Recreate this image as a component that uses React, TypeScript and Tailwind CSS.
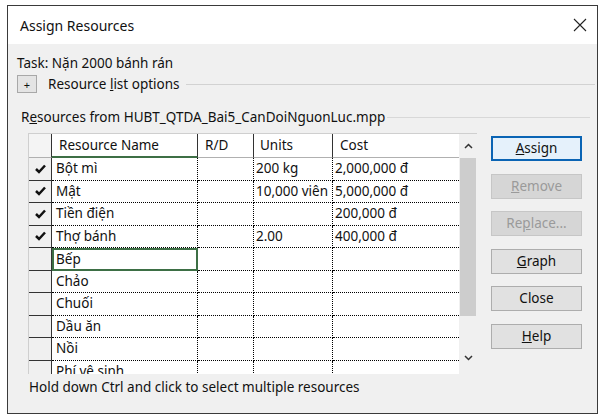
import React from "react"

const font = { fontFamily: '"Noto Sans", "Open Sans", sans-serif' }

type Row = { checked: boolean; name: string; units: string; cost: string }

const rows: Row[] = [
  { checked: true, name: "Bột mì", units: "200 kg", cost: "2,000,000 đ" },
  { checked: true, name: "Mật", units: "10,000 viên", cost: "5,000,000 đ" },
  { checked: true, name: "Tiền điện", units: "", cost: "200,000 đ" },
  { checked: true, name: "Thợ bánh", units: "2.00", cost: "400,000 đ" },
  { checked: false, name: "Bếp", units: "", cost: "" },
  { checked: false, name: "Chảo", units: "", cost: "" },
  { checked: false, name: "Chuối", units: "", cost: "" },
  { checked: false, name: "Dầu ăn", units: "", cost: "" },
  { checked: false, name: "Nồi", units: "", cost: "" },
  { checked: false, name: "Phí vệ sinh", units: "", cost: "" },
]

function Check() {
  return (
    <svg width="11" height="10" viewBox="0 0 11 10">
      <path d="M1 5 L4 8 L10 1.5" fill="none" stroke="#111" strokeWidth="2.5" />
    </svg>
  )
}

function Btn({ children, variant }: { children: React.ReactNode; variant?: "default" | "disabled" }) {
  const cls =
    variant === "default"
      ? "border-2 border-[#0a64b4] bg-[#e5f1fb] text-[#111]"
      : variant === "disabled"
        ? "border border-[#c6c6c6] bg-[#d6d6d6] text-[#9a9a9a]"
        : "border border-[#adadad] bg-[#e1e1e1] text-[#111]"
  return (
    <div className={`flex h-[25px] w-[91px] items-center justify-center text-[13.5px] ${cls}`}>{children}</div>
  )
}

export default function App() {
  return (
    <div className="h-[417px] w-[605px] overflow-hidden bg-white pl-[7px] pt-[5px]" style={font}>
      <div className="flex h-[409px] w-[591px] flex-col border border-[#3a3a3a] bg-[#f0f0f0]">
        {/* title bar */}
        <div className="flex h-[38px] items-center justify-between bg-white pl-[12px] pr-[10px] text-[14px] text-[#111]">
          <span>Assign Resources</span>
          <svg width="14" height="14" viewBox="0 0 14 14">
            <path d="M1 1 L13 13 M13 1 L1 13" stroke="#222" strokeWidth="1.1" />
          </svg>
        </div>

        <div className="flex flex-1 flex-col pl-[9px] text-[13.5px] text-[#111]">
          <div className="mt-[10px] leading-[18px]">Task: Nặn 2000 bánh rán</div>

          <div className="mt-[3px] flex items-center">
            <div className="flex h-[18px] w-[20px] items-center justify-center border border-[#a8a8a8] bg-[#e4e4e4] text-[11px] leading-none">
              +
            </div>
            <span className="ml-[11px] leading-[18px]">
              Resource <span className="underline">l</span>ist options
            </span>
            <div className="ml-[6px] mr-[2px] h-px flex-1 bg-[#d2d2d2]" />
          </div>

          <div className="mt-[15px] flex items-center pl-[4px]">
            <span className="leading-[18px]">
              R<span className="underline">e</span>sources from HUBT_QTDA_Bai5_CanDoiNguonLuc.mpp
            </span>
            <div className="ml-[2px] mr-[7px] h-px flex-1 bg-[#d8d8d8]" />
          </div>

          <div className="mt-[7px] flex">
            {/* grid */}
            <div className="ml-[11px] flex h-[241px] w-[449px] overflow-hidden border-l border-t border-[#cfcfcf] bg-white">
              <div className="w-[430px]">
                {/* header */}
                <div className="flex h-[24px] leading-[23px]">
                  <div className="w-[23px] border-b border-r border-b-[#b0b0b0] border-r-[#333] bg-[#f4f4f4]" />
                  <div className="w-[146px] border-b-2 border-r border-b-[#3d6f45] border-r-[#333] bg-white pl-[7px]">
                    Resource Name
                  </div>
                  <div className="w-[56px] border-b border-r border-b-[#b0b0b0] border-r-[#333] bg-white pl-[7px]">R/D</div>
                  <div className="w-[79px] border-b border-r border-b-[#b0b0b0] border-r-[#333] bg-white pl-[6px]">
                    Units
                  </div>
                  <div className="w-[126px] border-b border-b-[#b0b0b0] bg-white pl-[7px]">Cost</div>
                </div>
                {rows.map((r, i) => (
                  <div key={i} className="flex h-[22.5px] leading-[21px]">
                    <div className="flex w-[23px] items-center justify-center border-b border-r border-b-[#333] border-r-[#333] bg-[#f0f0f0]">
                      {r.checked && <Check />}
                    </div>
                    {r.name === "Bếp" ? (
                      <div className="w-[146px] border-2 border-[#3d6f45] pl-[2px] leading-[18px]">{r.name}</div>
                    ) : (
                      <div className="w-[146px] border-b border-r border-dotted border-black pl-[4px]">{r.name}</div>
                    )}
                    <div className="w-[56px] border-b border-r border-dotted border-black" />
                    <div className="w-[79px] whitespace-nowrap border-b border-r border-dotted border-black pl-[2px]">
                      {r.units}
                    </div>
                    <div className="w-[126px] border-b border-dotted border-black pl-[2px]">{r.cost}</div>
                  </div>
                ))}
              </div>
              {/* scrollbar */}
              <div className="flex w-[19px] flex-col bg-[#f0f0f0]">
                <div className="flex h-[24px] items-center justify-center">
                  <svg width="9" height="6" viewBox="0 0 9 6">
                    <path d="M1 5 L4.5 1.5 L8 5" fill="none" stroke="#333" strokeWidth="1.5" />
                  </svg>
                </div>
                <div className="mx-[1px] h-[158px] bg-[#cdcdcd]" />
                <div className="flex-1" />
                <div className="flex h-[26px] items-center justify-center pb-[6px]">
                  <svg width="9" height="6" viewBox="0 0 9 6">
                    <path d="M1 1 L4.5 4.5 L8 1" fill="none" stroke="#333" strokeWidth="1.5" />
                  </svg>
                </div>
              </div>
            </div>

            {/* buttons */}
            <div className="ml-[14px] mt-[3px] flex flex-col gap-[12.5px]">
              <Btn variant="default">
                <span>
                  <span className="underline">A</span>ssign
                </span>
              </Btn>
              <Btn variant="disabled">
                <span>
                  <span className="underline">R</span>emove
                </span>
              </Btn>
              <Btn variant="disabled">
                <span>
                  Re<span className="underline">p</span>lace...
                </span>
              </Btn>
              <Btn>
                <span>
                  <span className="underline">G</span>raph
                </span>
              </Btn>
              <Btn>Close</Btn>
              <Btn>
                <span>
                  <span className="underline">H</span>elp
                </span>
              </Btn>
            </div>
          </div>

          <div className="mt-[4px] pl-[12px] leading-[18px]">Hold down Ctrl and click to select multiple resources</div>
        </div>
      </div>
    </div>
  )
}
